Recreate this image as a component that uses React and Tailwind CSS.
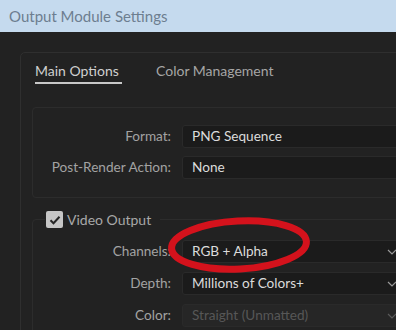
import React from "react";

const font = { fontFamily: "Lato, 'Noto Sans', sans-serif" };

const Chevron = ({ dim }) => (
  <svg width="10" height="6" viewBox="0 0 10 6" className="shrink-0">
    <path d="M1 1l4 4 4-4" fill="none" stroke={dim ? "#5a5a5a" : "#9a9a9a"} strokeWidth="1.2" />
  </svg>
);

const Row = ({ label, value, dim, chevron, wide }) => (
  <div className="flex items-center">
    <div className="w-[139px] shrink-0 text-right text-[13.6px] text-[#a3a3a3] pr-[1px]">{label}</div>
    <div
      className={`ml-[10px] h-[23px] shrink-0 flex items-center justify-between pl-[9px] pr-[8px] rounded-[3px] border border-[#2a2a2a] ${
        dim ? "bg-[#262626] text-[#575757]" : "bg-[#1b1b1b] text-[#dcdcdc]"
      } ${wide ? "w-[250px]" : "w-[224px]"} text-[13.6px]`}
    >
      <span>{value}</span>
      {chevron && <Chevron dim={dim} />}
    </div>
  </div>
);

const App = () => {
  return (
    <div className="relative w-[396px] h-[330px] overflow-hidden bg-[#222222]" style={font}>
      <div className="h-[32px] bg-[#c5daee] flex items-center pl-[9px] text-[15px] text-[#6d7e90]">
        Output Module Settings
      </div>

      <div className="pl-[20px] pt-[20px]">
        <div className="w-[400px] h-[300px] border border-[#2f2f2f] rounded-[5px]">
          {/* tabs */}
          <div className="flex items-end gap-[34px] pl-[14px] pt-[8px] h-[31px] text-[14px]">
            <div className="text-[#cfcfcf] border-b-2 border-[#c8c8c8] pb-[1px] w-[87px]">Main Options</div>
            <div className="text-[#a6a6a6] pb-[3px]">Color Management</div>
          </div>

          {/* format group */}
          <div className="ml-[11px] mt-[23px] border border-[#2c2c2c] rounded-[4px] pt-[17px] pb-[18px] flex flex-col gap-[8px]">
            <Row label="Format:" value="PNG Sequence" wide />
            <Row label="Post-Render Action:" value="None" wide />
          </div>

          {/* video output */}
          <fieldset className="ml-[11px] mt-[11px] border border-[#2c2c2c] rounded-[4px] px-0 pb-[10px] m-0">
            <legend className="ml-[12px] pl-[1px] pr-[9px] flex items-center gap-[4px] text-[14px] text-[#a8a8a8]">
              <span className="w-[17px] h-[17px] rounded-[2px] bg-[#c6c6c6] flex items-center justify-center">
                <svg width="12" height="10" viewBox="0 0 12 10">
                  <path d="M1.5 5.2l3 3 6-6.5" fill="none" stroke="#262626" strokeWidth="2" />
                </svg>
              </span>
              Video Output
            </legend>
            <div className="flex flex-col gap-[9px] pt-[10px]">
              <Row label="Channels:" value="RGB + Alpha" chevron />
              <Row label="Depth:" value="Millions of Colors+" chevron />
              <Row label="Color:" value="Straight (Unmatted)" chevron dim />
            </div>
          </fieldset>
        </div>
      </div>

      {/* red annotation */}
      <svg className="absolute left-0 top-0 pointer-events-none" width="396" height="330">
        <ellipse cx="239" cy="245" rx="67.5" ry="24" fill="none" stroke="#d4121c" strokeWidth="7" transform="rotate(-3 239 245)" />
      </svg>
    </div>
  );
};

export default App;
